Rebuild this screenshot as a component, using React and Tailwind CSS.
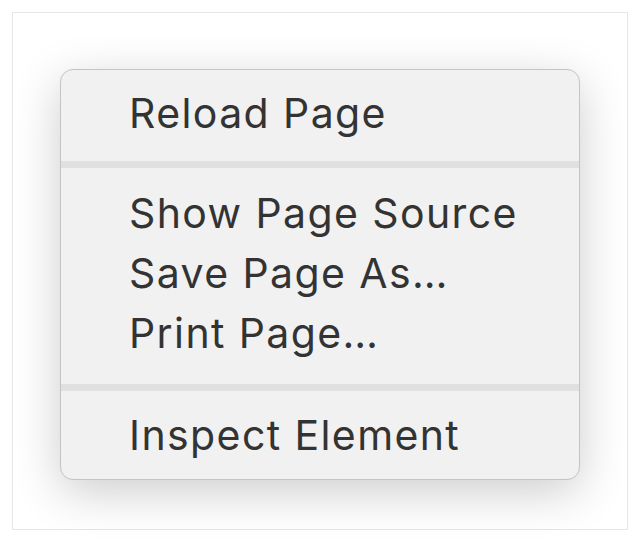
export default function App() {
  const font = { fontFamily: 'Inter, "Noto Sans", sans-serif' }
  return (
    <div className="w-[640px] h-[543px] bg-white pt-3 pl-3">
      <div className="w-[616px] h-[518px] border border-[#e6e6e6] bg-white pt-[56px] pl-[47px]">
        <div
          className="w-[520px] h-[411px] rounded-[13px] border border-[#c4c4c4] bg-[#f1f1f1] shadow-[0_12px_48px_rgba(0,0,0,0.2)] overflow-hidden text-[#333333] text-[41px] leading-[60px] tracking-[1.4px]"
          style={font}
        >
          <div className="pt-[13px] pb-[18px]">
            <div className="pl-[68px] h-[60px]">Reload Page</div>
          </div>
          <div className="h-[7px] bg-[#e0e0e0]" />
          <div className="pt-[15px] pb-[21px]">
            <div className="pl-[68px] h-[60px]">Show Page Source</div>
            <div className="pl-[68px] h-[60px]">Save Page As…</div>
            <div className="pl-[68px] h-[60px]">Print Page…</div>
          </div>
          <div className="h-[7px] bg-[#e0e0e0]" />
          <div className="pt-[14px]">
            <div className="pl-[68px] h-[60px]">Inspect Element</div>
          </div>
        </div>
      </div>
    </div>
  )
}
